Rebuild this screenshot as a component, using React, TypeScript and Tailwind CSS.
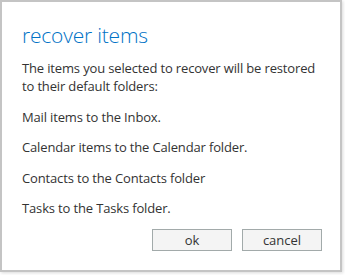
import React from 'react';

const items = [
  'Mail items to the Inbox.',
  'Calendar items to the Calendar folder.',
  'Contacts to the Contacts folder',
  'Tasks to the Tasks folder.',
];

const App: React.FC = () => {
  return (
    <div className="w-[345px] h-[275px] bg-white" style={{ fontFamily: '"Open Sans", "Noto Sans", sans-serif' }}>
      <div className="w-[342px] h-[272px] border-2 border-[#c4c4c4] bg-white shadow-[1px_1px_3px_rgba(0,0,0,0.15)] flex flex-col pl-5 pr-[18px] pt-[19px]">
        {/* Title */}
        <h1 className="text-[21px] font-light leading-[28px] text-[#0072c6] tracking-[-0.2px]">recover items</h1>

        {/* Body */}
        <div className="mt-[10px] text-[13px] leading-[18px] text-[#333333] tracking-[-0.15px]">
          <p>The items you selected to recover will be restored to their default folders:</p>
          {items.map((text) => (
            <p key={text} className="mt-[12.5px]">
              {text}
            </p>
          ))}
        </div>

        {/* Actions */}
        <div className="mt-[12px] flex justify-end gap-[10px]">
          <button className="w-20 h-[22px] border border-[#a2aaaa] bg-[#f4f4f4] text-[13px] leading-[18px] text-[#333333]">
            ok
          </button>
          <button className="w-20 h-[22px] border border-[#a2aaaa] bg-[#f4f4f4] text-[13px] leading-[18px] text-[#333333]">
            cancel
          </button>
        </div>
      </div>
    </div>
  );
};

export default App;
